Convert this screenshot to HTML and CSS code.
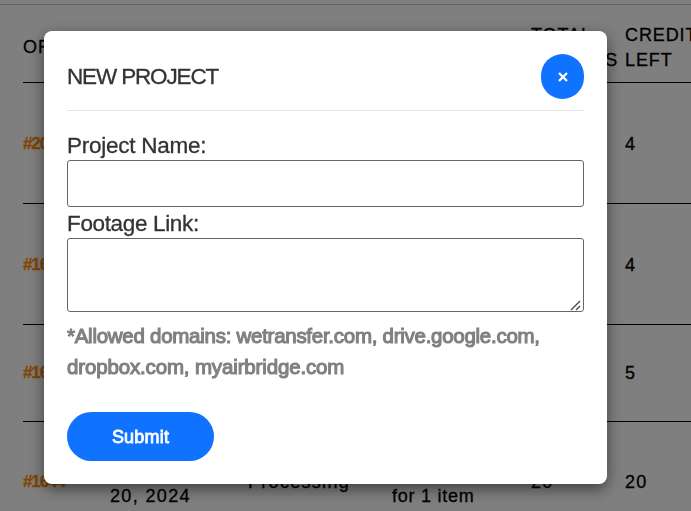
FILE: index.html
```html
<!DOCTYPE html>
<html lang="en">
<head>
<meta charset="utf-8">
<title>Orders</title>
<link rel="stylesheet" href="styles.css">
</head>
<body>
<main class="orders">
  <div class="row head"><div>ORDER</div><div>DATE</div><div>STATUS</div><div>TOTAL</div><div>TOTAL<br><span class="credits">CREDITS</span></div><div>CREDITS<br>LEFT</div></div>
  <div class="row"><a class="id">#2044</a><div></div><div></div><div></div><div></div><div>4</div></div>
  <div class="row"><a class="id">#1649</a><div></div><div></div><div></div><div></div><div>4</div></div>
  <div class="row short"><a class="id">#1646</a><div></div><div></div><div></div><div></div><div>5</div></div>
  <div class="row last"><a class="id">#1644</a><div class="date">May<br>20, 2024</div><div class="status">Processing</div><div class="item">$0.00<br>for 1 item</div><div>20</div><div>20</div></div>
</main>
<div class="overlay">
  <form class="modal">
    <header class="modal-head"><h2>NEW PROJECT</h2><button class="close" type="button" aria-label="Close"><svg viewBox="0 0 10 10"><path d="M1 1 9 9M9 1 1 9"/></svg></button></header>
    <label class="name" for="name">Project Name:</label>
    <input id="name" type="text">
    <label class="link" for="link">Footage Link:</label>
    <div class="area"><textarea id="link"></textarea><svg class="grip" viewBox="0 0 12 12"><path d="M1 11 10 2M6 11l4-4"/></svg></div>
    <p class="hint"><span class="line1">*Allowed domains: wetransfer.com, drive.google.com,</span><br><span class="line2">dropbox.com, myairbridge.com</span></p>
    <button class="submit" type="button">Submit</button>
  </form>
</div>
</body>
</html>
```
FILE: styles.css
```css
* { box-sizing: border-box; }
html, body { height: 100%; overflow: hidden; }
body { margin: 0; background: #fff; color: #000; font-family: "Liberation Sans", Arial, sans-serif; }
.orders { margin-top: 4px; padding-left: 23px; width: 740px; border-top: 1px solid #ccc; font-size: 18px; line-height: 25px; letter-spacing: 1.2px; -webkit-text-stroke: .3px; }
.row { display: grid; grid-template-columns: 87px 138px 144px 139px 94px 115px; align-items: center; height: 121px; padding-top: 2px; border-bottom: 1px solid #000; }
.head { height: 78px; padding-top: 8px; letter-spacing: .9px; }
.credits { letter-spacing: 1.2px; }
.short { height: 97px; padding-top: 0; }
.last { padding-top: 0; }
.date, .item { padding-top: 3px; }
.id { padding-bottom: 1px; color: #ff8c00; font-size: 17px; font-weight: 700; letter-spacing: -1.1px; }
.date { letter-spacing: 1.35px; }
.status { letter-spacing: 1.3px; }
.item { letter-spacing: .75px; }
.overlay { position: fixed; inset: 0; padding: 31px 0 0 44px; background: rgba(0, 0, 0, .5); }
.modal { width: 563px; height: 453px; padding: 23px; border-radius: 8px; background: #fff; box-shadow: 0 5px 15px rgba(0, 0, 0, .5); color: #333; }
.modal-head { display: flex; justify-content: space-between; height: 57px; border-bottom: 1px solid #e5e5e5; }
h2 { margin: 0; font-size: 22.5px; font-weight: 400; line-height: 46px; letter-spacing: -1.15px; -webkit-text-stroke: .3px; }
.close { display: grid; place-items: center; width: 43px; height: 45px; padding: 0; border: 0; border-radius: 22px; background: #0f73ff; }
.close svg { width: 10px; height: 10px; fill: none; stroke: #fff; stroke-width: 2.3; }
label { display: block; height: 31px; font-size: 22.5px; line-height: 33px; letter-spacing: -.25px; -webkit-text-stroke: .3px; }
.name { margin-top: 18px; }
.link { letter-spacing: -.35px; }
input, textarea { display: block; width: 100%; margin: 0; border: 1px solid #666; border-radius: 3px; background: #fff; }
input { height: 47px; }
textarea { height: 74px; resize: none; }
.area { position: relative; }
.grip { position: absolute; right: 2px; bottom: 1px; width: 12px; height: 12px; fill: none; stroke: #444; stroke-width: 1.3; }
.hint { margin: 8px 0 0; color: #808080; font-size: 20.5px; font-weight: 400; line-height: 31px; letter-spacing: -.27px; white-space: nowrap; -webkit-text-stroke: 1.1px; }
.line2 { letter-spacing: -.15px; }
.submit { display: block; width: 147px; height: 49px; margin-top: 30px; padding: 1px 0 0; border: 0; border-radius: 25px; background: #0f73ff; color: #fff; font: 400 18px "Liberation Sans", Arial, sans-serif; letter-spacing: .2px; -webkit-text-stroke: .8px; }
```
